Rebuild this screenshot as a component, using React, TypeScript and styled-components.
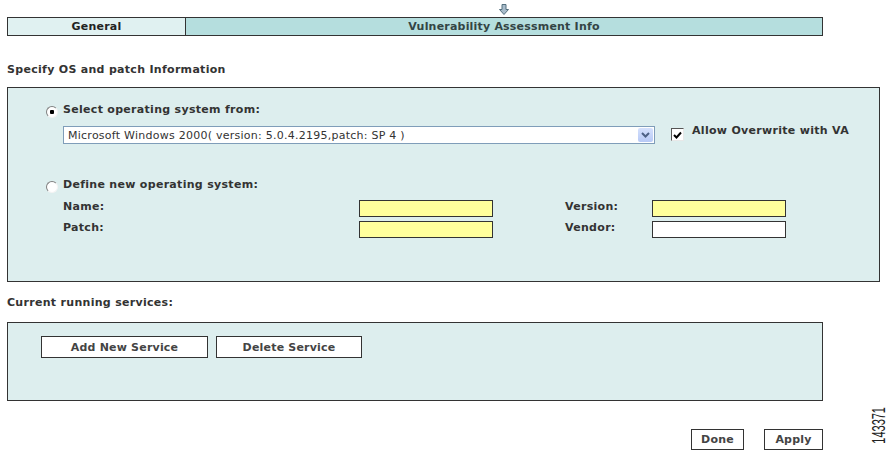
import styled, { createGlobalStyle } from 'styled-components';

const GlobalStyle = createGlobalStyle`
  html, body {
    margin: 0;
    background: #fff;
  }
  body {
    font-family: "DejaVu Sans", Verdana, sans-serif;
    font-size: 11px;
    color: #333;
    overflow: hidden;
  }
`;

const DownArrow = () => (
  <svg width="10" height="11" viewBox="0 0 10 11">
    <path
      d="M3 0.5 H7 V5.5 H9.5 L5 10.5 L0.5 5.5 H3 Z"
      fill="#a9bccb"
      stroke="#55707f"
      strokeWidth="1"
    />
  </svg>
);

const Chevron = () => (
  <svg width="9" height="6" viewBox="0 0 9 6">
    <path d="M1 1 L4.5 4.5 L8 1" fill="none" stroke="#4d6185" strokeWidth="2" />
  </svg>
);

const Tick = () => (
  <svg width="9" height="8" viewBox="0 0 9 8">
    <path d="M1 4 L3.5 6.5 L8 1.5" fill="none" stroke="#000" strokeWidth="2" />
  </svg>
);

const App = () => (
  <>
    <GlobalStyle />
    <Page>
      <ArrowRow>
        <span />
        <ArrowCell>
          <DownArrow />
        </ArrowCell>
      </ArrowRow>
      <TabBar>
        <Tab>General</Tab>
        <Tab $active>Vulnerability Assessment Info</Tab>
      </TabBar>

      <SectionTitle $top={27}>Specify OS and patch Information</SectionTitle>
      <OsPanel>
        <RadioRow>
          <Radio $checked />
          <Label>Select operating system from:</Label>
        </RadioRow>
        <SelectRow>
          <Select>
            <SelectText>Microsoft Windows 2000( version: 5.0.4.2195,patch: SP 4 )</SelectText>
            <DropButton>
              <Chevron />
            </DropButton>
          </Select>
          <Checkbox>
            <Tick />
          </Checkbox>
          <CheckLabel>Allow Overwrite with VA</CheckLabel>
        </SelectRow>
        <RadioRow $top={34}>
          <Radio />
          <Label>Define new operating system:</Label>
        </RadioRow>
        <FieldGrid>
          <FieldLabel>Name:</FieldLabel>
          <TextBox $required />
          <FieldLabel>Version:</FieldLabel>
          <TextBox $required />
          <FieldLabel>Patch:</FieldLabel>
          <TextBox $required />
          <FieldLabel>Vendor:</FieldLabel>
          <TextBox />
        </FieldGrid>
      </OsPanel>

      <SectionTitle $top={14}>Current running services:</SectionTitle>
      <ServicePanel>
        <Button $width={167} $height={22}>Add New Service</Button>
        <Button $width={146} $height={22}>Delete Service</Button>
      </ServicePanel>

      <Footer>
        <Button $width={53} $height={21}>Done</Button>
        <Button $width={59} $height={21}>Apply</Button>
      </Footer>
    </Page>
    <FigureNumber>143371</FigureNumber>
  </>
);

export default App;

const Page = styled.div`
  padding: 0 7px;
  width: 890px;
  box-sizing: border-box;
`;

const ArrowRow = styled.div`
  display: grid;
  grid-template-columns: 177px 1fr;
  width: 816px;
  height: 17px;
`;

const ArrowCell = styled.div`
  display: flex;
  justify-content: center;
  padding-top: 4px;
  svg {
    display: block;
  }
`;

const TabBar = styled.div`
  display: grid;
  grid-template-columns: 177px 1fr;
  width: 816px;
  height: 19px;
  box-sizing: border-box;
  border: 1px solid #333;
`;

const Tab = styled.div<{ $active?: boolean }>`
  display: flex;
  align-items: center;
  justify-content: center;
  font-weight: bold;
  letter-spacing: 0.2px;
  color: ${({ $active }) => ($active ? '#334444' : '#222')};
  background: ${({ $active }) => ($active ? '#b5dede' : '#e0f1f1')};
  border-left: ${({ $active }) => ($active ? '1px solid #333' : 'none')};
`;

const SectionTitle = styled.div<{ $top: number }>`
  margin-top: ${({ $top }) => $top}px;
  font-weight: bold;
  line-height: 14px;
  letter-spacing: 0.3px;
  color: #333;
`;

const OsPanel = styled.div`
  margin-top: 10px;
  width: 873px;
  height: 195px;
  box-sizing: border-box;
  border: 1px solid #333;
  background: #ddeeee;
  padding: 15px 0 0 38px;
`;

const RadioRow = styled.div<{ $top?: number }>`
  display: flex;
  align-items: center;
  gap: 5px;
  height: 14px;
  margin-top: ${({ $top }) => $top ?? 0}px;
`;

const Radio = styled.span<{ $checked?: boolean }>`
  display: inline-block;
  width: 12px;
  height: 12px;
  margin-top: 4px;
  box-sizing: border-box;
  border-radius: 50%;
  border: 1px solid;
  border-color: #808080 #f4f4f4 #f4f4f4 #808080;
  background: ${({ $checked }) =>
    $checked ? 'radial-gradient(circle, #000 0 2px, #fff 2.5px)' : '#fff'};
`;

const Label = styled.span`
  font-weight: bold;
  line-height: 14px;
  letter-spacing: 0.3px;
  color: #333;
`;

const FieldLabel = styled(Label)`
  align-self: start;
`;

const CheckLabel = styled(Label)`
  margin-left: 8px;
  margin-top: -2px;
`;

const SelectRow = styled.div`
  display: flex;
  align-items: flex-start;
  margin: 9px 0 0 17px;
`;

const Select = styled.div`
  display: flex;
  align-items: center;
  width: 592px;
  height: 18px;
  box-sizing: border-box;
  border: 1px solid #7f9db9;
  background: #fff;
  padding: 0 1px 0 4px;
`;

const SelectText = styled.span`
  flex: 1;
  color: #333;
  letter-spacing: 0.25px;
  white-space: nowrap;
`;

const DropButton = styled.span`
  display: flex;
  align-items: center;
  justify-content: center;
  width: 15px;
  height: 14px;
  border-radius: 2px;
  background: linear-gradient(#d5e1fd, #b7c9f6);
`;

const Checkbox = styled.span`
  display: flex;
  align-items: center;
  justify-content: center;
  width: 13px;
  height: 13px;
  margin: 2px 0 0 16px;
  box-sizing: border-box;
  border: 1px solid;
  border-color: #555 #e8e8e8 #e8e8e8 #555;
  background: #fff;
`;

const FieldGrid = styled.div`
  display: grid;
  grid-template-columns: 296px 206px 87px 134px;
  grid-auto-rows: 17px;
  row-gap: 4px;
  align-items: center;
  margin: 8px 0 0 17px;
`;

const TextBox = styled.span<{ $required?: boolean }>`
  display: block;
  width: 134px;
  height: 17px;
  box-sizing: border-box;
  border: 1px solid #333;
  background: ${({ $required }) => ($required ? '#ffff9c' : '#fff')};
`;

const ServicePanel = styled.div`
  display: flex;
  align-items: flex-start;
  gap: 8px;
  margin-top: 12px;
  width: 816px;
  height: 79px;
  box-sizing: border-box;
  border: 1px solid #333;
  background: #ddeeee;
  padding: 13px 0 0 33px;
`;

const Button = styled.button<{ $width: number; $height: number }>`
  width: ${({ $width }) => $width}px;
  height: ${({ $height }) => $height}px;
  padding: 0;
  box-sizing: border-box;
  border: 1px solid #333;
  background: #fff;
  font-family: "DejaVu Sans", Verdana, sans-serif;
  font-size: 11px;
  font-weight: bold;
  letter-spacing: 0.2px;
  color: #444;
`;

const Footer = styled.div`
  display: flex;
  justify-content: flex-end;
  gap: 20px;
  width: 816px;
  margin-top: 28px;
`;

const FigureNumber = styled.span`
  position: absolute;
  left: 874px;
  top: 407px;
  writing-mode: vertical-rl;
  transform: rotate(180deg) scaleX(1.6);
  font-family: "Liberation Sans", Arial, sans-serif;
  font-size: 11px;
  line-height: 11px;
  color: #222;
`;
